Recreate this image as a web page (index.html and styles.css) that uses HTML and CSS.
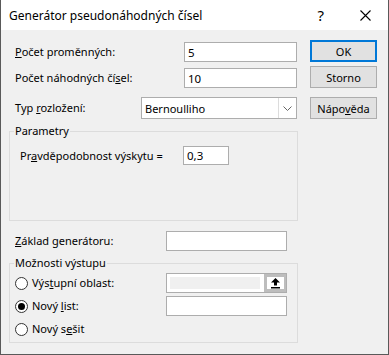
FILE: index.html
```html
<!DOCTYPE html>
<html lang="cs">
<head>
    <meta charset="UTF-8">
    <title>Generátor pseudonáhodných čísel</title>
    <link rel="stylesheet" href="styles.css">
</head>
<body>
    <div class="dialog">
        <div class="titlebar">
            <span class="title">Generátor pseudonáhodných čísel</span>
            <span class="help">?</span>
            <svg class="close" width="11" height="11" viewBox="0 0 11 11">
                <path d="M0.5 0.5 L10.5 10.5 M10.5 0.5 L0.5 10.5" stroke="#000" stroke-width="1.1" fill="none"/>
            </svg>
        </div>
        <div class="content">
            <div class="row">
                <label class="lbl lbl-count"><u>P</u>očet proměnných:</label>
                <input class="field field-count" value="5">
                <button class="btn btn-default">OK</button>
            </div>
            <div class="row row-second">
                <label class="lbl lbl-count">Počet náhodných čí<u>s</u>el:</label>
                <input class="field field-count" value="10">
                <button class="btn">Storno</button>
            </div>
            <div class="row row-type">
                <label class="lbl lbl-type">Typ <u>r</u>ozložení:</label>
                <div class="select">
                    <span class="select-text">Bernoulliho</span>
                    <span class="select-arrow">
                        <svg width="9" height="5" viewBox="0 0 9 5">
                            <path d="M0.5 0.5 L4.5 4.5 L8.5 0.5" stroke="#666" stroke-width="1" fill="none"/>
                        </svg>
                    </span>
                </div>
                <button class="btn">Nápo<u>v</u>ěda</button>
            </div>

            <fieldset class="group group-params">
                <legend>Parametry</legend>
                <div class="param-row">
                    <label class="lbl lbl-param">Pr<u>a</u>vděpodobnost výskytu =</label>
                    <input class="field field-param" value="0,3">
                </div>
            </fieldset>

            <div class="seed-row">
                <label class="lbl lbl-seed"><u>Z</u>áklad generátoru:</label>
                <input class="field field-wide" value="">
            </div>

            <fieldset class="group group-output">
                <legend>Možnosti výstupu</legend>
                <div class="radio-row radio-first">
                    <span class="radio"></span>
                    <label class="lbl lbl-radio">Výs<u>t</u>upní oblast:</label>
                    <div class="ref-field">
                        <span class="ref-input"></span>
                        <span class="ref-btn">
                            <svg width="9" height="11" viewBox="0 0 9 11">
                                <polygon points="4.5,0 9,4.5 6,4.5 6,7.5 3,7.5 3,4.5 0,4.5" fill="#000"/>
                                <rect x="0" y="9" width="9" height="1.5" fill="#000"/>
                            </svg>
                        </span>
                    </div>
                </div>
                <div class="radio-row">
                    <span class="radio radio-checked"></span>
                    <label class="lbl lbl-radio">Nový <u>l</u>ist:</label>
                    <input class="field field-wide" value="">
                </div>
                <div class="radio-row">
                    <span class="radio"></span>
                    <label class="lbl lbl-radio">Nový s<u>e</u>šit</label>
                </div>
            </fieldset>
        </div>
    </div>
</body>
</html>
```

FILE: styles.css
```css
body {
    margin: 0;
    font-family: "Noto Sans", "DejaVu Sans", sans-serif;
    font-size: 11px;
    color: #000;
}
.dialog {
    width: 389px;
    height: 355px;
    box-sizing: border-box;
    background-color: #f0f0f0;
    border: 1px solid #595959;
    border-top: 0;
}
.titlebar {
    height: 30px;
    background-color: #fff;
    display: flex;
    align-items: center;
    padding: 0 17px 0 8px;
}
.title {
    flex: 1;
    font-size: 12px;
}
.help {
    font-size: 15px;
    margin-right: 36px;
}
.close {
    display: block;
}
.content {
    padding: 10px 0 0 8px;
}
.row {
    display: flex;
    align-items: flex-end;
    height: 22px;
    padding-left: 6px;
}
.row-second {
    margin-top: 4px;
}
.row-type {
    margin-top: 9px;
    align-items: center;
}
.lbl {
    line-height: 20px;
    white-space: nowrap;
}
.lbl-count { width: 169px; }
.lbl-type { width: 126px; }
.lbl-param { width: 163px; }
.lbl-seed { width: 151px; }
.lbl-radio { width: 134px; }
.field {
    box-sizing: border-box;
    height: 20px;
    border: 1px solid #adadad;
    background-color: #fff;
    padding: 0 3px;
    font: inherit;
    font-size: 11.5px;
    color: #000;
    outline: none;
    margin: 0;
}
.field-count { width: 113px; }
.field-param { width: 46px; height: 19px; }
.field-wide { width: 121px; }
.select {
    box-sizing: border-box;
    width: 156px;
    height: 22px;
    border: 1px solid #adadad;
    background-color: #fff;
    display: flex;
    align-items: center;
}
.select-text {
    flex: 1;
    padding-left: 3px;
}
.select-arrow {
    width: 17px;
    height: 100%;
    border-left: 1px solid #dcdcdc;
    display: flex;
    align-items: center;
    justify-content: center;
}
.select-arrow svg {
    display: block;
}
.btn {
    box-sizing: border-box;
    width: 67px;
    height: 22px;
    margin-left: 13px;
    background-color: #e1e1e1;
    border: 1px solid #adadad;
    font: inherit;
    color: #000;
    padding: 0;
}
.btn-default {
    border: 2px solid #0078d7;
}
.group {
    box-sizing: border-box;
    width: 289px;
    margin: 4px 0 0 0;
    padding: 0;
    border: 1px solid #dcdcdc;
    min-width: 0;
}
.group legend {
    margin-left: 4px;
    padding: 0 1px;
    line-height: 16px;
}
.group-params {
    height: 98px;
}
.param-row {
    display: flex;
    align-items: center;
    height: 19px;
    margin-top: 7px;
    padding-left: 10px;
}
.seed-row {
    display: flex;
    align-items: center;
    height: 20px;
    margin-top: 10px;
    padding-left: 6px;
}
.group-output {
    height: 88px;
}
.radio-row {
    display: flex;
    align-items: center;
    height: 20px;
    margin-top: 3px;
    padding-left: 5px;
}
.radio-first {
    margin-top: 2px;
}
.radio {
    box-sizing: border-box;
    width: 13px;
    height: 13px;
    border: 1px solid #333;
    border-radius: 50%;
    background-color: #fff;
    margin-right: 4px;
    display: flex;
    align-items: center;
    justify-content: center;
}
.radio-checked::after {
    content: "";
    width: 7px;
    height: 7px;
    border-radius: 50%;
    background-color: #000;
}
.ref-field {
    box-sizing: border-box;
    width: 121px;
    height: 20px;
    border: 1px solid #adadad;
    background-color: #fff;
    display: flex;
}
.ref-input {
    width: 90px;
    margin: 3px;
    background-color: #f0f0f0;
}
.ref-btn {
    box-sizing: border-box;
    margin-left: auto;
    width: 22px;
    height: 100%;
    border: 3px solid #bdbdbd;
    border-right-width: 2px;
    background-color: #fff;
    display: flex;
    align-items: center;
    justify-content: center;
}
.ref-btn svg {
    display: block;
}
```
